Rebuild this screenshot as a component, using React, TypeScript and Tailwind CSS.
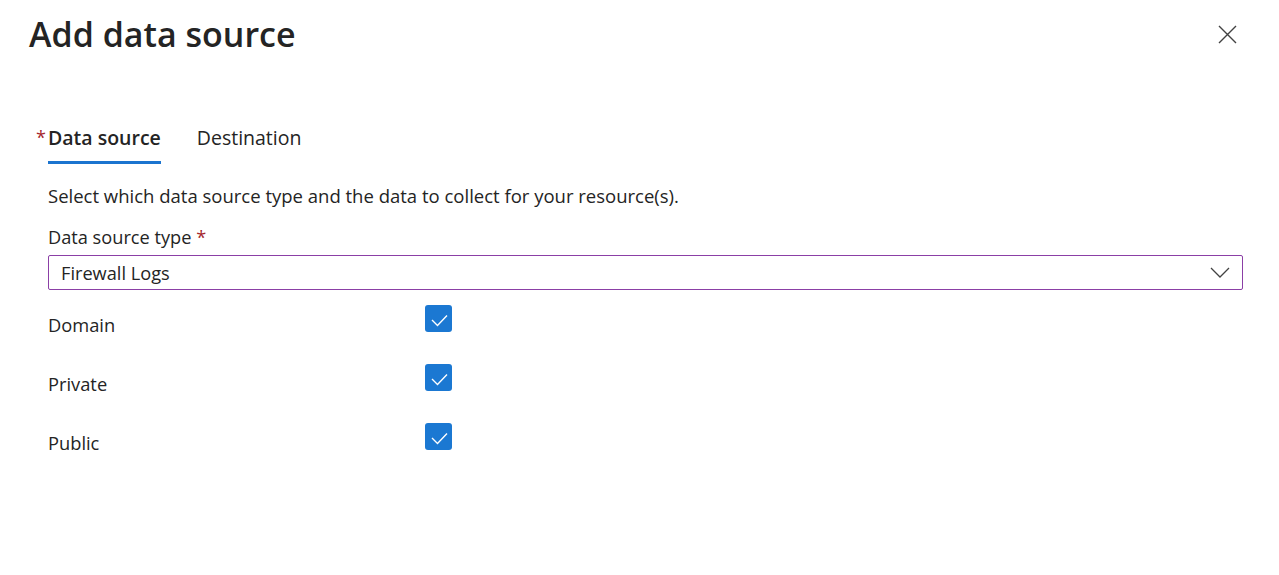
const options = ['Domain', 'Private', 'Public']

export default function App() {
    return (
        <div className="min-h-[575px] w-[1279px] bg-white text-[#242424] font-['Open_Sans',sans-serif]">
            {/* Header */}
            <div className="flex items-start justify-between pl-[29px] pr-[42px] pt-[12px]">
                <h1 className="text-[34px] leading-[44px] font-semibold">Add data source</h1>
                <button className="mt-[13px] text-[#424242]">
                    <svg width="19" height="19" viewBox="0 0 19 19" fill="none" stroke="currentColor" strokeWidth="1.4">
                        <path d="M1 1 18 18M18 1 1 18" />
                    </svg>
                </button>
            </div>

            <div className="pl-[48px] pr-[36px]">
                {/* Tabs */}
                <div className="flex items-end gap-[36px] mt-[69px]">
                    <div className="relative flex flex-col">
                        <span className="absolute -left-[12px] top-0 text-[#a4262c] text-[18px] leading-[24px]">*</span>
                        <span className="text-[19.5px] leading-[26px] font-semibold">Data source</span>
                        <div className="mt-[10px] h-[3px] bg-[#1b74cf]" />
                    </div>
                    <span className="text-[19.5px] leading-[26px] mb-[13px]">Destination</span>
                </div>

                {/* Description */}
                <p className="mt-[20px] text-[18.5px] leading-[24px]">
                    Select which data source type and the data to collect for your resource(s).
                </p>

                {/* Dropdown */}
                <label className="block mt-[17px] text-[18.2px] leading-[24px]">
                    Data source type <span className="text-[#a4262c]">*</span>
                </label>
                <div className="mt-[6px] h-[35px] flex items-center justify-between border border-[#8b3fa6] rounded-[2px] pl-[12px] pr-[12px]">
                    <span className="text-[18.2px] leading-[24px]">Firewall Logs</span>
                    <svg width="20" height="11" viewBox="0 0 20 11" fill="none" stroke="#424242" strokeWidth="1.3">
                        <path d="M1 1 10 10 19 1" />
                    </svg>
                </div>

                {/* Checkboxes */}
                <div className="mt-[15px] flex flex-col">
                    {options.map((o) => (
                        <div key={o} className="flex h-[59px]">
                            <span className="w-[377px] pt-[8px] text-[18.3px] leading-[24px]">{o}</span>
                            <div className="w-[27px] h-[27px] rounded-[3px] bg-[#1b78d2]">
                                <svg width="27" height="27" viewBox="0 0 27 27" fill="none" stroke="white" strokeWidth="1.4">
                                    <path d="M7 15 12.5 20.5 22 10.5" />
                                </svg>
                            </div>
                        </div>
                    ))}
                </div>
            </div>
        </div>
    )
}
